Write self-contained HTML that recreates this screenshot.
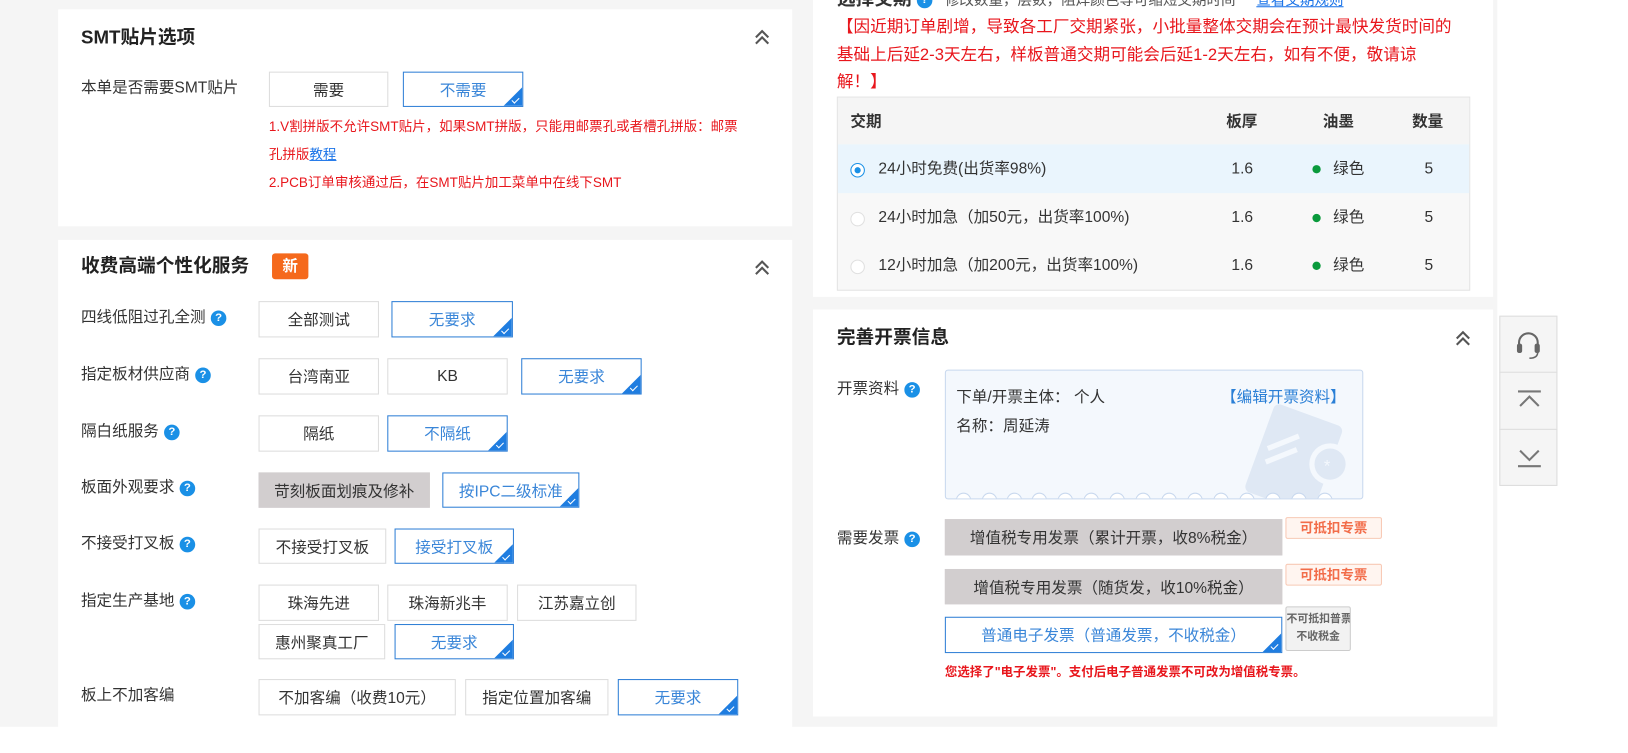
<!DOCTYPE html>
<html><head><meta charset="utf-8"><style>
*{margin:0;padding:0;box-sizing:border-box}
body{width:1628px;height:725px;overflow:hidden;background:#fff;font-family:"Liberation Sans","Noto Sans CJK SC",sans-serif;color:#333;font-size:15px;position:relative}
#w{position:absolute;left:0;top:0;width:1568px;height:700px;transform:scale(1.0383);transform-origin:0 0}
.a{position:absolute}
.bg{position:absolute;left:0;top:0;width:1442px;height:725px;background:#f5f5f5}
.panel{position:absolute;background:#fff}
.t{position:absolute;white-space:nowrap;line-height:1}
.h{font-size:18px;font-weight:bold;color:#222}
.b{position:absolute;border:1px solid #ddd;background:#fff;text-align:center;font-size:15px;color:#333;display:flex;align-items:center;justify-content:center;white-space:nowrap}
.b.s{border-color:#2f7fd6;color:#3a86d8;overflow:hidden}
.b.s:after{content:"";position:absolute;right:0;bottom:0;width:0;height:0;border-left:18px solid transparent;border-bottom:18px solid #1f7de0}
.b.s:before{content:"";position:absolute;right:3px;bottom:4px;width:6px;height:3px;border-left:1.5px solid #fff;border-bottom:1.5px solid #fff;transform:rotate(-45deg);z-index:2}
.b.g{background:#d2cecf;border-color:#d2cecf}
.q{display:inline-block;width:15px;height:15px;border-radius:50%;background:#1a90e6;color:#fff;font-size:11px;font-weight:bold;text-align:center;line-height:15px;vertical-align:middle;margin-left:5px}
.chev{position:absolute;width:18px;height:18px}
.red{color:#e8161c}
</style></head><body>
<div class="bg"></div>
<div id="w">
<div class="bg" style="height:700px"></div>

<div class="panel" style="left:56px;top:9px;width:707px;height:209px"></div>
<div class="t h" style="left:78px;top:27px">SMT贴片选项</div>
<svg class="chev" style="left:725px;top:26px" viewBox="0 0 18 18"><path d="M3 10l6-6 6 6M3 16l6-6 6 6" fill="none" stroke="#555" stroke-width="2"/></svg>
<div class="t" style="left:78px;top:77px">本单是否需要SMT贴片</div>
<div class="b" style="left:259px;top:69px;width:115px;height:34px">需要</div>
<div class="b s" style="left:388px;top:69px;width:116px;height:34px">不需要</div>
<div class="t red" style="left:259px;top:115px;font-size:13px">1.V割拼版不允许SMT贴片，如果SMT拼版，只能用邮票孔或者槽孔拼版：邮票</div>
<div class="t red" style="left:259px;top:142px;font-size:13px">孔拼版<span style="color:#1a73e8;text-decoration:underline">教程</span></div>
<div class="t red" style="left:259px;top:169px;font-size:13px">2.PCB订单审核通过后，在SMT贴片加工菜单中在线下SMT</div>

<div class="panel" style="left:56px;top:231px;width:707px;height:494px"></div>
<div class="t h" style="left:78px;top:247px">收费高端个性化服务</div>
<div class="a" style="left:262px;top:244px;width:35px;height:25px;background:#f5691c;border-radius:3px;color:#fff;font-weight:bold;font-size:15px;text-align:center;line-height:25px">新</div>
<svg class="chev" style="left:725px;top:248px" viewBox="0 0 18 18"><path d="M3 10l6-6 6 6M3 16l6-6 6 6" fill="none" stroke="#555" stroke-width="2"/></svg>

<div class="t" style="left:78px;top:298px">四线低阻过孔全测<span class="q">?</span></div>
<div class="b" style="left:249px;top:290px;width:116px;height:35px">全部测试</div>
<div class="b s" style="left:377px;top:290px;width:117px;height:35px">无要求</div>

<div class="t" style="left:78px;top:353px">指定板材供应商<span class="q">?</span></div>
<div class="b" style="left:249px;top:345px;width:116px;height:35px">台湾南亚</div>
<div class="b" style="left:373px;top:345px;width:116px;height:35px">KB</div>
<div class="b s" style="left:502px;top:345px;width:116px;height:35px">无要求</div>

<div class="t" style="left:78px;top:408px">隔白纸服务<span class="q">?</span></div>
<div class="b" style="left:249px;top:400px;width:116px;height:35px">隔纸</div>
<div class="b s" style="left:373px;top:400px;width:116px;height:35px">不隔纸</div>

<div class="t" style="left:78px;top:462px">板面外观要求<span class="q">?</span></div>
<div class="b g" style="left:249px;top:455px;width:165px;height:34px">苛刻板面划痕及修补</div>
<div class="b s" style="left:426px;top:455px;width:132px;height:34px">按IPC二级标准</div>

<div class="t" style="left:78px;top:516px">不接受打叉板<span class="q">?</span></div>
<div class="b" style="left:249px;top:509px;width:123px;height:34px">不接受打叉板</div>
<div class="b s" style="left:380px;top:509px;width:115px;height:34px">接受打叉板</div>

<div class="t" style="left:78px;top:571px">指定生产基地<span class="q">?</span></div>
<div class="b" style="left:249px;top:563px;width:116px;height:35px">珠海先进</div>
<div class="b" style="left:373px;top:563px;width:116px;height:35px">珠海新兆丰</div>
<div class="b" style="left:498px;top:563px;width:115px;height:35px">江苏嘉立创</div>
<div class="b" style="left:249px;top:601px;width:122px;height:34px">惠州聚真工厂</div>
<div class="b s" style="left:380px;top:601px;width:115px;height:34px">无要求</div>

<div class="t" style="left:78px;top:662px">板上不加客编</div>
<div class="b" style="left:249px;top:654px;width:190px;height:35px">不加客编（收费10元）</div>
<div class="b" style="left:448px;top:654px;width:138px;height:35px">指定位置加客编</div>
<div class="b s" style="left:595px;top:654px;width:116px;height:35px">无要求</div>

<div class="panel" style="left:783px;top:0;width:655px;height:286px"></div>
<div class="t" style="left:806px;top:-10px;font-size:18px;font-weight:bold">选择交期<span class="q">?</span><span style="font-weight:normal;font-size:14px;margin-left:12px;color:#555">修改数量，层数，阻焊颜色等可缩短交期时间</span><span style="font-weight:normal;font-size:14px;margin-left:20px;color:#1a73e8;text-decoration:underline">查看交期规则</span></div>
<div class="t red" style="left:806px;top:19px;font-size:16px">【因近期订单剧增，导致各工厂交期紧张，小批量整体交期会在预计最快发货时间的</div>
<div class="t red" style="left:806px;top:46px;font-size:16px">基础上后延2-3天左右，样板普通交期可能会后延1-2天左右，如有不便，敬请谅</div>
<div class="t red" style="left:806px;top:72px;font-size:16px">解！】</div>
<div class="a" style="left:806px;top:93px;width:610px;height:187px;border:1px solid #e4e4e4;background:#f8f8f8"></div>
<div class="a" style="left:807px;top:94px;width:608px;height:45px;background:#f5f5f5"></div>
<div class="a" style="left:807px;top:139px;width:608px;height:47px;background:#eaf5fd"></div>
<div class="t" style="left:819px;top:110px;font-weight:bold">交期</div>
<div class="t" style="left:1181px;top:110px;font-weight:bold">板厚</div>
<div class="t" style="left:1274px;top:110px;font-weight:bold">油墨</div>
<div class="t" style="left:1360px;top:110px;font-weight:bold">数量</div>
<div class="a" style="left:819px;top:157px;width:14px;height:14px;border-radius:50%;border:1px solid #1a90e6;background:#fff"><div style="margin:3px;width:6px;height:6px;border-radius:50%;background:#1a90e6"></div></div>
<div class="a" style="left:819px;top:204px;width:14px;height:14px;border-radius:50%;border:1px solid #e0e0e0;background:#fff"></div>
<div class="a" style="left:819px;top:250px;width:14px;height:14px;border-radius:50%;border:1px solid #e0e0e0;background:#fff"></div>
<div class="t" style="left:846px;top:155px">24小时免费(出货率98%)</div>
<div class="t" style="left:846px;top:202px">24小时加急（加50元，出货率100%)</div>
<div class="t" style="left:846px;top:248px">12小时加急（加200元，出货率100%)</div>
<div class="t" style="left:1186px;top:155px">1.6</div><div class="t" style="left:1186px;top:202px">1.6</div><div class="t" style="left:1186px;top:248px">1.6</div>
<div class="a" style="left:1264px;top:159px;width:8px;height:8px;border-radius:50%;background:#0a9a3c"></div>
<div class="a" style="left:1264px;top:206px;width:8px;height:8px;border-radius:50%;background:#0a9a3c"></div>
<div class="a" style="left:1264px;top:252px;width:8px;height:8px;border-radius:50%;background:#0a9a3c"></div>
<div class="t" style="left:1284px;top:155px">绿色</div><div class="t" style="left:1284px;top:202px">绿色</div><div class="t" style="left:1284px;top:248px">绿色</div>
<div class="t" style="left:1372px;top:155px">5</div><div class="t" style="left:1372px;top:202px">5</div><div class="t" style="left:1372px;top:248px">5</div>

<div class="panel" style="left:783px;top:298px;width:655px;height:392px"></div>
<div class="t h" style="left:806px;top:316px">完善开票信息</div>
<svg class="chev" style="left:1400px;top:316px" viewBox="0 0 18 18"><path d="M3 10l6-6 6 6M3 16l6-6 6 6" fill="none" stroke="#555" stroke-width="2"/></svg>
<div class="t" style="left:806px;top:367px">开票资料<span class="q">?</span></div>
<div class="a" style="left:910px;top:356px;width:403px;height:125px;background:#f4f8fd;border:1px solid #c8d8ee;border-radius:3px;overflow:hidden">
<svg class="a" style="left:280px;top:20px" width="120" height="110" viewBox="0 0 120 110"><rect x="20" y="20" width="70" height="90" rx="6" transform="rotate(20 55 65)" fill="#dfe8f4"/><path d="M30 55l30 -12M28 68l30-12" stroke="#f4f8fd" stroke-width="5"/><circle cx="90" cy="70" r="20" fill="#f4f8fd"/><circle cx="90" cy="70" r="15" fill="#dfe8f4"/><text x="84" y="77" fill="#f4f8fd" font-size="16">*</text></svg>
<svg class="a" style="left:0;top:110px" width="403" height="15"><g fill="#fff" stroke="#c8d8ee"><circle cx="17" cy="15" r="7"/><circle cx="42" cy="15" r="7"/><circle cx="66" cy="15" r="7"/><circle cx="90" cy="15" r="7"/><circle cx="115" cy="15" r="7"/><circle cx="140" cy="15" r="7"/><circle cx="165" cy="15" r="7"/><circle cx="190" cy="15" r="7"/><circle cx="215" cy="15" r="7"/><circle cx="240" cy="15" r="7"/><circle cx="265" cy="15" r="7"/><circle cx="290" cy="15" r="7"/><circle cx="315" cy="15" r="7"/><circle cx="340" cy="15" r="7"/><circle cx="365" cy="15" r="7"/></g></svg>
</div>
<div class="t" style="left:921px;top:375px">下单/开票主体： 个人</div>
<div class="t" style="left:1176px;top:375px;color:#2a7fd6">【编辑开票资料】</div>
<div class="t" style="left:921px;top:403px">名称：周延涛</div>

<div class="t" style="left:806px;top:511px">需要发票<span class="q">?</span></div>
<div class="b g" style="left:910px;top:500px;width:325px;height:35px">增值税专用发票（累计开票，收8%税金）</div>
<div class="b g" style="left:910px;top:548px;width:325px;height:34px">增值税专用发票（随货发，收10%税金）</div>
<div class="b s" style="left:910px;top:594px;width:325px;height:35px">普通电子发票（普通发票，不收税金）</div>
<div class="a" style="left:1238px;top:498px;width:93px;height:21px;border:1px solid #f8c9b5;background:#fff5f0;color:#f26d4a;font-size:13px;font-weight:bold;text-align:center;line-height:19px;border-radius:2px">可抵扣专票</div>
<div class="a" style="left:1238px;top:543px;width:93px;height:21px;border:1px solid #f8c9b5;background:#fff5f0;color:#f26d4a;font-size:13px;font-weight:bold;text-align:center;line-height:19px;border-radius:2px">可抵扣专票</div>
<div class="a" style="left:1238px;top:584px;width:63px;height:43px;border:1px solid #ccc;background:#f2f2f2;color:#666;font-size:10.5px;font-weight:bold;text-align:center;line-height:17px;padding-top:3px;border-radius:2px;white-space:nowrap;overflow:hidden">不可抵扣普票<br>不收税金</div>
<div class="t" style="left:910px;top:641px;font-size:12px;font-weight:bold;color:#e8161c">您选择了"电子发票"。支付后电子普通发票不可改为增值税专票。</div>

<div class="a" style="left:1444px;top:304px;width:56px;height:164px;background:#f5f5f5;border:1px solid #ddd"></div>
<div class="a" style="left:1444px;top:358px;width:56px;height:1px;background:#ddd"></div>
<div class="a" style="left:1444px;top:413px;width:56px;height:1px;background:#ddd"></div>
<svg class="a" style="left:1458px;top:317px" width="28" height="30" viewBox="0 0 28 30"><path d="M5 16v-3a9 9 0 0 1 18 0v3" fill="none" stroke="#666" stroke-width="2"/><rect x="3" y="14" width="5" height="9" rx="2" fill="#666"/><rect x="20" y="14" width="5" height="9" rx="2" fill="#666"/><path d="M23 22c0 4-3 6-8 6" fill="none" stroke="#666" stroke-width="1.5"/></svg>
<svg class="a" style="left:1461px;top:375px" width="24" height="20" viewBox="0 0 24 20"><path d="M1 2h22M3 16l9-9 9 9" fill="none" stroke="#777" stroke-width="2"/></svg>
<svg class="a" style="left:1461px;top:431px" width="24" height="20" viewBox="0 0 24 20"><path d="M3 3l9 9 9-9M1 18h22" fill="none" stroke="#777" stroke-width="2"/></svg>
</div>
</body></html>
